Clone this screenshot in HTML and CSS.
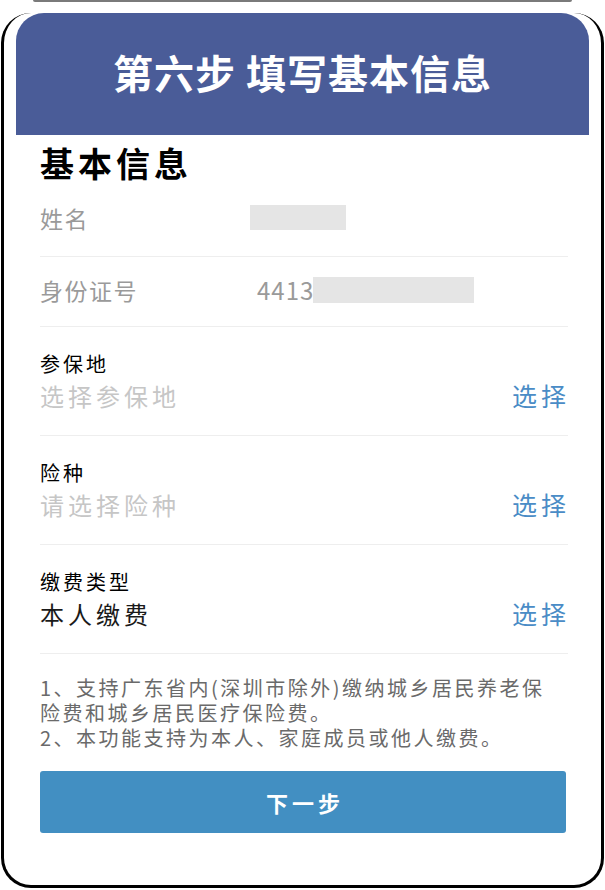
FILE: index.html
```html
<!DOCTYPE html>
<html lang="zh-CN">
<head>
<meta charset="utf-8">
<title>第六步 填写基本信息</title>
<link rel="stylesheet" href="styles.css">
</head>
<body>
<div class="prev-edge"></div>
<div class="frame">
  <header class="banner">
    <h1 class="banner-title">第六步 填写基本信息</h1>
  </header>
  <main class="content">
    <h2 class="section-title">基本信息</h2>
    <div class="row row-static row-first">
      <span class="row-label">姓名</span>
      <span class="row-value"><span class="mask mask-name"></span></span>
    </div>
    <div class="row row-static">
      <span class="row-label">身份证号</span>
      <span class="row-value"><span class="id-prefix">4413</span><span class="mask mask-id"></span></span>
    </div>
    <div class="row row-select">
      <div class="field">
        <div class="field-label">参保地</div>
        <div class="field-value placeholder">选择参保地</div>
      </div>
      <a class="pick">选择</a>
    </div>
    <div class="row row-select">
      <div class="field">
        <div class="field-label">险种</div>
        <div class="field-value placeholder">请选择险种</div>
      </div>
      <a class="pick">选择</a>
    </div>
    <div class="row row-select">
      <div class="field">
        <div class="field-label">缴费类型</div>
        <div class="field-value">本人缴费</div>
      </div>
      <a class="pick">选择</a>
    </div>
    <div class="notes">
      <p class="note">1、支持广东省内(深圳市除外)缴纳城乡居民养老保</p>
      <p class="note">险费和城乡居民医疗保险费。</p>
      <p class="note">2、本功能支持为本人、家庭成员或他人缴费。</p>
    </div>
    <button class="next-btn" type="button">下一步</button>
  </main>
</div>
</body>
</html>
```
FILE: styles.css
```css
* { box-sizing: border-box; }
html, body {
  margin: 0;
  padding: 0;
  background: #ffffff;
  font-family: "Noto Sans CJK SC", "Noto Sans", sans-serif;
}
body { width: 605px; height: 890px; overflow: hidden; }

.prev-edge {
  margin: 0 33px;
  height: 2px;
  background: #7a7a7a;
  border-radius: 0 0 2px 2px;
}

.frame {
  margin: 11px 1px 0;
  height: 875px;
  border: 3px solid #000;
  border-top: 0;
  border-radius: 30px;
  padding: 0 12px;
  background: #fff;
}

.banner {
  height: 122px;
  background: #4a5c98;
  border-radius: 28px 28px 0 0;
  display: flex;
  align-items: center;
  justify-content: center;
}
.banner-title {
  margin: 0;
  color: #fff;
  font-size: 40px;
  font-weight: 700;
  letter-spacing: 1px;
  line-height: 1;
  padding-bottom: 4px;
}

.content {
  padding: 0 21px 0 24px;
}

.section-title {
  margin: 0;
  padding-top: 7px;
  font-size: 34px;
  font-weight: 700;
  letter-spacing: 4px;
  line-height: 42px;
  color: #000;
}

.row {
  display: flex;
  align-items: center;
  border-bottom: 1px solid #eeeeee;
}
.row-static { height: 70px; padding-bottom: 4px; }
.row-static.row-first { height: 73px; }
.row-select {
  height: 109px;
  justify-content: space-between;
  align-items: stretch;
}

.row-label {
  width: 210px;
  flex: none;
  font-size: 23px;
  letter-spacing: 1.5px;
  color: #9a9a9a;
}
.row-value {
  display: flex;
  align-items: center;
}
.id-prefix {
  font-size: 24px;
  letter-spacing: 1px;
  color: #9a9a9a;
  padding-left: 7px;
}
.mask {
  display: inline-block;
  background: #e5e5e5;
}
.mask-name { width: 96px; height: 25px; margin-top: -2px; }
.mask-id { width: 161px; height: 26px; margin-left: -1px; }

.field {
  padding-top: 24px;
}
.field-label {
  font-size: 20px;
  letter-spacing: 3px;
  line-height: 26px;
  color: #000;
}
.field-value {
  margin-top: 3px;
  font-size: 24px;
  letter-spacing: 4px;
  line-height: 32px;
  color: #1a1a1a;
}
.field-value.placeholder { color: #c6c6c6; }

.pick {
  align-self: flex-end;
  margin-bottom: 24px;
  font-size: 25px;
  letter-spacing: 4px;
  margin-right: -2px;
  line-height: 32px;
  color: #4a8cc6;
}

.notes {
  padding-top: 21px;
}
.note {
  margin: 0;
  font-size: 20px;
  letter-spacing: 2.5px;
  line-height: 25px;
  color: #6a6a6a;
  white-space: nowrap;
}

.next-btn {
  display: flex;
  align-items: center;
  justify-content: center;
  margin-top: 21px;
  width: 526px;
  height: 62px;
  border: 0;
  border-radius: 3px;
  background: #428fc2;
  color: #fff;
  font-family: inherit;
  font-size: 22px;
  font-weight: 700;
  letter-spacing: 4px;
  padding: 0 0 0 4px;
}
```
